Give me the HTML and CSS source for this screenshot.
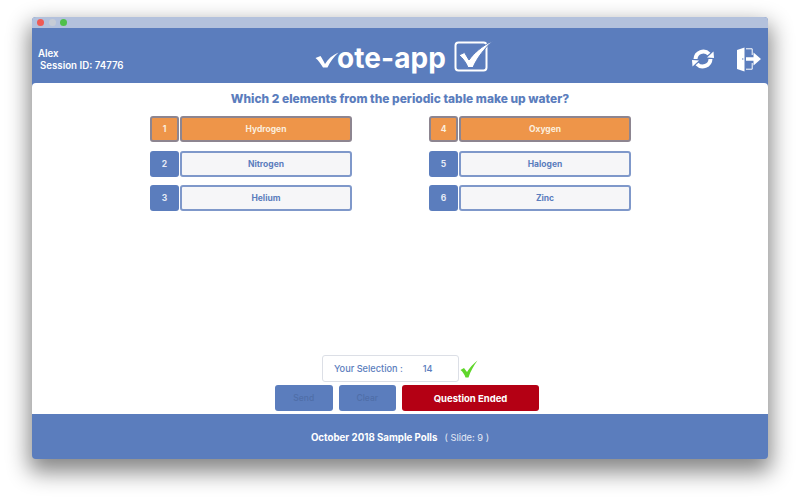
FILE: index.html
```html
<!DOCTYPE html>
<html lang="en">
<head>
<meta charset="utf-8">
<title>vote-app</title>
<link rel="stylesheet" href="styles.css">
</head>
<body>
<div class="window">
  <div class="titlebar">
    <span class="light red"></span><span class="light grey"></span><span class="light green"></span>
  </div>
  <header class="header">
    <div class="user">
      <div class="user-name">Alex</div>
      <div class="user-session">Session ID: 74776</div>
    </div>
    <div class="logo">
      <svg class="logo-v" viewBox="0 0 24 18" width="24" height="18"><path d="M0.500 7 L5.500 5 C7 7 8.500 10 10 13 C13 8 17.500 4 23.500 1.500 C18.500 6 15 11 12.500 16.500 L8 16.500 C6 13 3.500 9.500 0.500 7 Z" fill="#fff"/></svg>
      <span class="logo-text">ote-app</span>
      <svg class="logo-check" viewBox="0 0 39 32" width="39" height="32"><rect x="1.500" y="2.500" width="31" height="28" rx="3" fill="none" stroke="#fff" stroke-width="2"/><path d="M5 15 L10.500 12.500 L15 20 C20 13 28 6 38.500 1 C30 9 23 18 19 27.500 L14 27.500 C12 22.500 9 18.500 5 15 Z" fill="#fff" stroke="#5b7dbd" stroke-width="1"/></svg>
    </div>
    <div class="header-icons">
      <svg viewBox="0 0 26 26" width="26" height="26"><path d="M5.500 13 A7.800 7.800 0 0 1 19 8" fill="none" stroke="#fff" stroke-width="4"/><path d="M20.500 13 A7.800 7.800 0 0 1 7 18" fill="none" stroke="#fff" stroke-width="4"/><path d="M23.500 5.500 L24 12 L17 11.500 Z" fill="#fff"/><path d="M2.500 20.500 L2 14 L9 14.500 Z" fill="#fff"/></svg>
      <svg viewBox="0 0 26 26" width="26" height="26"><path d="M1 4 L8.500 1.500 L8.500 25.500 L1 23 Z" fill="#fff"/><circle cx="6.800" cy="13" r="0.700" fill="#5b7dbd"/><path d="M10 2.800 H16.200 V9 M16.200 17 V23.200 H10" fill="none" stroke="#fff" stroke-width="1"/><path d="M10 11.200 H17.500 V6.500 L25 13 L17.500 19.500 V14.800 H10 Z" fill="#fff"/></svg>
    </div>
  </header>
  <main class="content">
    <h1 class="question">Which 2 elements from the periodic table make up water?</h1>
    <div class="options">
      <div class="option selected"><span class="num">1</span><span class="label">Hydrogen</span></div>
      <div class="option selected"><span class="num">4</span><span class="label">Oxygen</span></div>
      <div class="option"><span class="num">2</span><span class="label">Nitrogen</span></div>
      <div class="option"><span class="num">5</span><span class="label">Halogen</span></div>
      <div class="option"><span class="num">3</span><span class="label">Helium</span></div>
      <div class="option"><span class="num">6</span><span class="label">Zinc</span></div>
    </div>
    <div class="selection-row">
      <div class="selection"><span>Your Selection :</span><span class="selection-value">14</span></div>
      <svg class="tick" viewBox="0 0 18 18" width="18" height="18"><path d="M0.500 10 L4 8 L7 12 C9.500 8 13 4 17.500 0.500 C14 5.500 10.500 11 8.500 17.500 L5.500 17.500 C4.500 14.500 3 12 0.500 10 Z" fill="#5fd62a"/></svg>
    </div>
    <div class="actions">
      <button class="btn btn-muted">Send</button>
      <button class="btn btn-muted">Clear</button>
      <button class="btn btn-ended">Question Ended</button>
    </div>
  </main>
  <footer class="footer">
    <span class="footer-title">October 2018 Sample Polls</span><span class="footer-slide">( Slide: 9 )</span>
  </footer>
</div>
</body>
</html>
```
FILE: styles.css
```css
* { box-sizing: border-box; }
html, body { height: 100%; }
body {
  margin: 0;
  padding: 17px 32px 41px;
  background: #fff;
  font-family: Inter, "Liberation Sans", sans-serif;
  overflow: hidden;
}
.window {
  height: 442px;
  display: flex;
  flex-direction: column;
  background: #5b7dbd;
  border-radius: 4px;
  box-shadow: 0 10px 22px 3px rgba(0, 0, 0, 0.48);
}
.titlebar {
  height: 11px;
  flex: none;
  display: flex;
  align-items: center;
  gap: 4.500px;
  padding-left: 5px;
  background: #b3c1dc;
  border-radius: 4px 4px 0 0;
}
.light { width: 7px; height: 7px; border-radius: 50%; }
.red { background: #ef5a54; }
.grey { background: #c6ccd6; }
.green { background: #4fc04a; }
.header {
  height: 55px;
  flex: none;
  display: grid;
  grid-template-columns: 1fr auto 1fr;
  align-items: center;
  color: #fff;
}
.user { padding: 9px 0 0 6px; font-size: 9.700px; font-weight: 600; line-height: 12.500px; }
.user-session { padding-left: 2px; }
.logo { display: flex; align-items: center; padding: 5px 0 0 8px; }
.logo-v { margin-top: 3px; margin-right: -2px; }
.logo-text {
  font-size: 28px;
  font-weight: 700;
  line-height: 1;
  letter-spacing: 0.100px;
}
.logo-check { margin-left: 8px; margin-top: -4px; }
.header-icons { display: flex; justify-content: flex-end; align-items: center; gap: 20px; padding: 6px 6px 0 0; }
.content {
  flex: 1;
  display: flex;
  flex-direction: column;
  align-items: center;
  background: #fff;
  border-radius: 4px 4px 0 0;
}
.question {
  margin: 8px 0 0;
  font-size: 11.950px;
  font-weight: 800;
  line-height: 15px;
  color: #5b7dbd;
}
.options {
  margin: 10px 19px 0 0;
  width: 481px;
  display: grid;
  grid-template-columns: 202px 202px;
  justify-content: space-between;
  row-gap: 8.500px;
}
.option { display: flex; gap: 1px; height: 26px; }
.num, .label {
  display: flex;
  align-items: center;
  justify-content: center;
  font-size: 8.500px;
  font-weight: 700;
  border-radius: 3px;
}
.num { width: 29px; flex: none; background: #5b7dbd; color: #e6ebf5; }
.label { flex: 1; background: #f6f6f8; color: #5b7dbd; border: 2px solid #7f98ca; }
.selected .num, .selected .label { background: #ee9549; color: #fbeede; border: 2px solid #8d8590; }
.selection-row {
  margin-top: auto;
  display: flex;
  align-items: center;
  gap: 1px;
}
.selection {
  width: 137px;
  height: 27px;
  display: flex;
  align-items: center;
  gap: 20px;
  padding-left: 11px;
  border: 1px solid #dcdfe6;
  border-radius: 3px;
  font-size: 9.200px;
  font-weight: 500;
  color: #5b7dbd;
}
.actions { margin: 3px 0 3px 14px; display: flex; gap: 6px; }
.btn {
  height: 26px;
  width: 57.500px;
  padding: 0;
  border: 0;
  border-radius: 3px;
  font: 500 8.500px Inter, "Liberation Sans", sans-serif;
}
.btn-muted { background: #5b7dbd; color: #4f6ea8; }
.btn-ended { width: 137px; background: #b40014; color: #fff; font-size: 9.500px; font-weight: 700; }
.footer {
  height: 45px;
  flex: none;
  display: flex;
  align-items: center;
  justify-content: center;
  gap: 7px;
  padding-top: 2px;
  color: #fff;
  font-size: 9.700px;
}
.footer-title { font-weight: 700; }
.footer-slide { font-size: 9.300px; font-weight: 400; color: #e4e9f4; }
```
